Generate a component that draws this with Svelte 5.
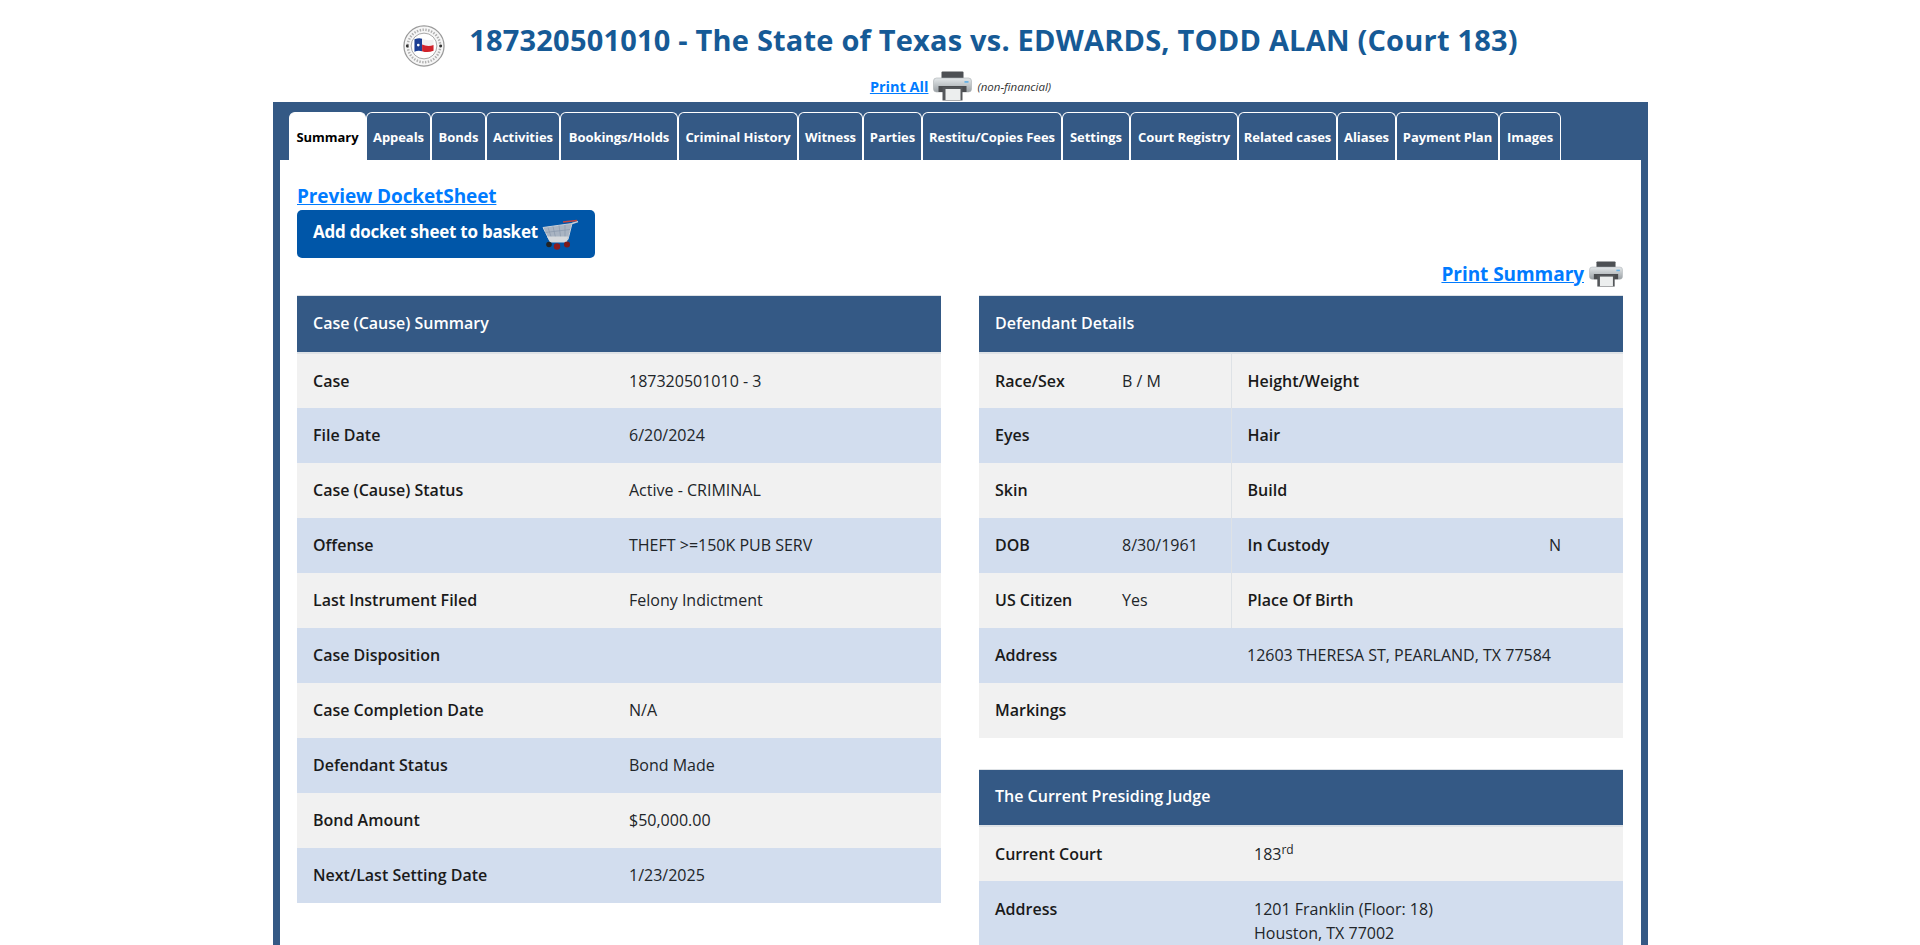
<script>
	const tabs = [
		{ label: "Summary", w: 77, active: true },
		{ label: "Appeals", w: 65 },
		{ label: "Bonds", w: 55 },
		{ label: "Activities", w: 74 },
		{ label: "Bookings/Holds", w: 118 },
		{ label: "Criminal History", w: 120 },
		{ label: "Witness", w: 65 },
		{ label: "Parties", w: 59 },
		{ label: "Restitu/Copies Fees", w: 140 },
		{ label: "Settings", w: 68 },
		{ label: "Court Registry", w: 108 },
		{ label: "Related cases", w: 99 },
		{ label: "Aliases", w: 59 },
		{ label: "Payment Plan", w: 103 },
		{ label: "Images", w: 62 }
	];

	const summary = [
		["Case", "187320501010 - 3"],
		["File Date", "6/20/2024"],
		["Case (Cause) Status", "Active - CRIMINAL"],
		["Offense", "THEFT >=150K PUB SERV"],
		["Last Instrument Filed", "Felony Indictment"],
		["Case Disposition", ""],
		["Case Completion Date", "N/A"],
		["Defendant Status", "Bond Made"],
		["Bond Amount", "$50,000.00"],
		["Next/Last Setting Date", "1/23/2025"]
	];

	const defendant = [
		["Race/Sex", "B / M", "Height/Weight", ""],
		["Eyes", "", "Hair", ""],
		["Skin", "", "Build", ""],
		["DOB", "8/30/1961", "In Custody", "N"],
		["US Citizen", "Yes", "Place Of Birth", ""]
	];
</script>

{#snippet printer(cls)}
	<svg class={cls} viewBox="0 0 40 30" aria-hidden="true">
		<defs>
			<linearGradient id="body" x1="0" y1="0" x2="0" y2="1">
				<stop offset="0" stop-color="#e4e8ea" />
				<stop offset="1" stop-color="#9ba1a5" />
			</linearGradient>
		</defs>
		<rect x="9" y="0.5" width="22" height="8" rx="1" fill="#4d5054" />
		<rect x="1" y="7" width="38" height="14" rx="3" fill="url(#body)" stroke="#a9aeb2" stroke-width="0.6" />
		<rect x="32" y="10" width="4" height="1.8" fill="#69b2e4" />
		<rect x="6" y="15" width="28" height="6" fill="#4b4d50" />
		<rect x="10" y="16" width="20" height="13.5" fill="#54575a" />
		<rect x="13" y="18" width="15" height="11" fill="#eceeee" />
	</svg>
{/snippet}

<div class="page">
	<header class="top">
		<h1>
			<svg class="seal" viewBox="0 0 44 44" aria-hidden="true">
				<circle cx="22" cy="22" r="21" fill="#f6f6f6" stroke="#9a9a9a" stroke-width="1.3" />
				<circle cx="22" cy="22" r="13.5" fill="#fff" stroke="#a4a4a4" stroke-width="1" />
				<circle cx="22" cy="22" r="17" fill="none" stroke="#b0b0b0" stroke-width="2.6" stroke-dasharray="1.5 1.5" />
				<circle cx="4.5" cy="22" r="1.5" fill="#333" />
				<circle cx="39.5" cy="22" r="1.5" fill="#333" />
				<path d="M12 15 Q17 13 20 14.5 V27.5 Q16 26 12 28 Z" fill="#1c3f94" />
				<path d="M20 14.5 Q26 17 32 15 V21 Q26 23 20 20.5 Z" fill="#f1f1f1" />
				<path d="M20 20.5 Q26 23 32 21 V27 Q26 29.5 20 27.5 Z" fill="#d0232b" />
				<circle cx="16" cy="21" r="1.4" fill="#fff" />
			</svg>
			<span>187320501010 - The State of Texas vs. EDWARDS, TODD ALAN (Court 183)</span>
		</h1>
		<div class="printall">
			<a href="#all">Print All</a>
			{@render printer("printer-lg")}
			<em>(non-financial)</em>
		</div>
	</header>

	<main class="frame">
		<nav class="tabs">
			{#each tabs as tab}
				<div class="tab" class:active={tab.active} style="width: {tab.w}px">{tab.label}</div>
			{/each}
		</nav>

		<section class="content">
			<a class="preview" href="#preview">Preview DocketSheet</a>
			<button class="basket">
				<span>Add docket sheet to basket</span>
				<svg class="cart" viewBox="0 0 38 32" aria-hidden="true">
					<path d="M2 9 L31 5 L27 21 H8 Z" fill="#a9b4c2" stroke="#c6ced8" stroke-width="1" />
					<path d="M7 9 L11 21 M12 8 L15 21 M18 7 L20 21 M24 6.5 L24 21 M4 14 L29 11" stroke="#8494a8" stroke-width="0.6" fill="none" />
					<path d="M6 18 H27 L26 24 H9 Z" fill="#d6d9dc" />
					<path d="M31 5 L37 3" stroke="#c8d0d8" stroke-width="1.4" />
					<path d="M22 3.5 L36 2" stroke="#c8453e" stroke-width="1.6" />
					<circle cx="8" cy="26" r="2.8" fill="#222" />
					<circle cx="16" cy="28" r="3.2" fill="#8f1c1c" />
					<circle cx="26" cy="26" r="3" fill="#7d1a1a" />
				</svg>
			</button>
			<div class="printsummary">
				<a href="#summary">Print Summary</a>
				{@render printer("printer-sm")}
			</div>

			<div class="cols">
				<div class="col">
					<table>
						<colgroup><col class="c-sum" /><col /></colgroup>
						<thead><tr><th colspan="2">Case (Cause) Summary</th></tr></thead>
						<tbody>
							{#each summary as [k, v]}
								<tr>
									<td class="key">{k}</td>
									<td>{v}</td>
								</tr>
							{/each}
						</tbody>
					</table>
				</div>

				<div class="col">
					<table class="details">
						<colgroup><col class="c-k1" /><col class="c-v1" /><col class="c-k2" /><col /></colgroup>
						<thead><tr><th colspan="4">Defendant Details</th></tr></thead>
						<tbody>
							{#each defendant as [a, b, c, d]}
								<tr>
									<td class="key">{a}</td>
									<td>{b}</td>
									<td class="key k2">{c}</td>
									<td>{d}</td>
								</tr>
							{/each}
							<tr>
								<td class="key">Address</td>
								<td class="wide" colspan="3">12603 THERESA ST, PEARLAND, TX 77584</td>
							</tr>
							<tr class="plain">
								<td class="key">Markings</td>
								<td colspan="3"></td>
							</tr>
						</tbody>
					</table>

					<table class="judge">
						<colgroup><col class="c-j" /><col /></colgroup>
						<thead><tr><th colspan="2">The Current Presiding Judge</th></tr></thead>
						<tbody>
							<tr>
								<td class="key">Current Court</td>
								<td>183<sup>rd</sup></td>
							</tr>
							<tr>
								<td class="key">Address</td>
								<td>1201 Franklin (Floor: 18)<br />Houston, TX 77002</td>
							</tr>
						</tbody>
					</table>
				</div>
			</div>
		</section>
	</main>
</div>

<style>
	:global(body) {
		margin: 0;
		background: #fff;
	}
	.page {
		height: 945px;
		overflow: hidden;
		padding-left: 1px;
		font-family: "Open Sans", "Noto Sans", sans-serif;
		font-size: 16px;
		color: #212529;
	}
	.top {
		height: 102px;
		text-align: center;
	}
	h1 {
		display: flex;
		justify-content: center;
		align-items: flex-start;
		gap: 24px;
		margin: 0;
		padding-top: 20px;
		height: 48px;
		font-size: 29px;
		line-height: 40px;
		font-weight: 700;
		letter-spacing: 0.2px;
		color: #165a96;
		white-space: nowrap;
	}
	.seal {
		width: 42px;
		height: 44px;
		margin-top: 4px;
	}
	.printall {
		display: flex;
		justify-content: center;
		align-items: center;
		gap: 4px;
		height: 30px;
		margin-top: 3px;
	}
	.printall a {
		font-size: 14.5px;
		font-weight: 700;
		color: #007bff;
	}
	.printall em {
		font-size: 11.5px;
		color: #333;
	}
	.printer-lg {
		width: 41px;
		height: 30px;
	}
	.printer-sm {
		width: 36px;
		height: 26px;
		margin-left: 4px;
	}
	.frame {
		width: 1361px;
		margin: 0 auto;
		padding: 10px 7px 0;
		background: #345985;
	}
	.tabs {
		display: flex;
		padding-left: 9px;
		height: 48px;
	}
	.tab {
		box-sizing: border-box;
		display: flex;
		justify-content: center;
		align-items: center;
		height: 48px;
		border: 1px solid #fff;
		border-bottom: 0;
		border-radius: 6px 6px 0 0;
		font-size: 13px;
		font-weight: 700;
		letter-spacing: -0.05px;
		color: #fff;
		white-space: nowrap;
	}
	.tab.active {
		background: #fff;
		color: #000;
	}
	.content {
		background: #fff;
		padding: 23px 17px 0;
		height: 800px;
	}
	.preview {
		display: block;
		width: fit-content;
		height: 27px;
		line-height: 27px;
		font-size: 19px;
		font-weight: 700;
		letter-spacing: -0.1px;
		color: #007bff;
	}
	.basket {
		display: flex;
		align-items: center;
		gap: 3px;
		box-sizing: border-box;
		width: 298px;
		height: 48px;
		padding: 0 16px;
		border: 0;
		border-radius: 5px;
		background: #0056a8;
		color: #fff;
		font-family: inherit;
		font-size: 17px;
		font-weight: 700;
		letter-spacing: -0.25px;
		white-space: nowrap;
	}
	.basket span {
		margin-bottom: 6px;
	}
	.cart {
		width: 38px;
		height: 33px;
		flex: none;
	}
	.printsummary {
		display: flex;
		justify-content: flex-end;
		align-items: center;
		height: 38px;
		padding-bottom: 5px;
		margin-top: -1px;
		box-sizing: border-box;
	}
	.printsummary a {
		font-size: 19px;
		font-weight: 700;
		letter-spacing: -0.05px;
		color: #007bff;
	}
	.cols {
		display: flex;
		gap: 38px;
	}
	.col {
		width: 644px;
	}
	table {
		width: 100%;
		border-collapse: collapse;
		table-layout: fixed;
		border-top: 1px solid #dee2e6;
	}
	.c-sum {
		width: 316px;
	}
	.c-k1 {
		width: 127px;
	}
	.c-v1 {
		width: 125px;
	}
	.c-k2 {
		width: 302px;
	}
	.c-j {
		width: 259px;
	}
	th {
		box-sizing: border-box;
		height: 57px;
		padding: 0 16px 2px;
		border-bottom: 2px solid #dee2e6;
		background: #345985;
		color: #fff;
		font-weight: 600;
		text-align: left;
	}
	td {
		box-sizing: border-box;
		height: 55px;
		padding: 0 0 0 16px;
		line-height: 24px;
		background: #d2ddee;
	}
	tbody tr:nth-child(odd) td {
		background: #f1f1f1;
	}
	tbody tr.plain td {
		background: #f1f1f1;
	}
	.key {
		font-weight: 600;
		color: #1a1a1a;
	}
	.k2 {
		border-left: 1px solid #dee2e6;
	}
	.wide {
		padding-left: 141px;
	}
	.judge {
		margin-top: 31px;
	}
	.judge tr:nth-child(2) td {
		height: 79px;
		vertical-align: top;
		padding-top: 16px;
	}
	sup {
		font-size: 12px;
		line-height: 0;
	}
</style>
